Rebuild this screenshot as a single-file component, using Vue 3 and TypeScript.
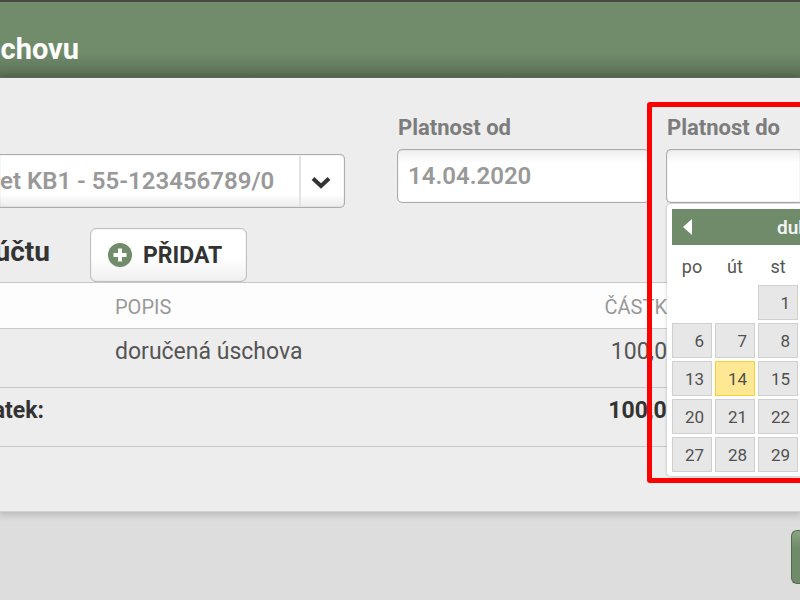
<script setup lang="ts">
import { ref } from 'vue'

interface Movement {
  description: string
  amount: string
}

const account = ref('kb1')
const validFrom = ref('14.04.2020')
const validTo = ref('')
const selectedDay = ref(14)

const movements: Movement[] = [{ description: 'doručená úschova', amount: '100,00' }]
const dayNames = ['po', 'út', 'st']
const weeks: (number | null)[][] = [
  [null, null, 1],
  [6, 7, 8],
  [13, 14, 15],
  [20, 21, 22],
  [27, 28, 29],
]
</script>

<template>
  <div class="page">
    <header class="topbar">
      <h1>chovu</h1>
    </header>

    <main class="panel">
      <form class="fields" @submit.prevent>
        <div class="account">
          <select v-model="account" aria-label="Účet">
            <option value="kb1">et KB1 - 55-123456789/0</option>
          </select>
          <svg class="chevron" viewBox="0 0 20 14" aria-hidden="true">
            <path d="M2 2.5 L10 10 L18 2.5" />
          </svg>
        </div>

        <div class="field from">
          <label for="valid-from">Platnost od</label>
          <input id="valid-from" v-model="validFrom" type="text" />
        </div>

        <div class="field to">
          <label for="valid-to">Platnost do</label>
          <input id="valid-to" v-model="validTo" type="text" />

          <div class="calendar">
            <div class="month">
              <button type="button" class="previous" aria-label="Předchozí měsíc">
                <svg viewBox="0 0 9 16" aria-hidden="true"><path d="M9 0 V16 L0 8 Z" /></svg>
              </button>
              <span>duben</span>
            </div>
            <table class="days">
              <thead>
                <tr>
                  <th v-for="name in dayNames" :key="name" scope="col">{{ name }}</th>
                </tr>
              </thead>
              <tbody>
                <tr v-for="(week, index) in weeks" :key="index">
                  <td v-for="(day, column) in week" :key="column">
                    <button
                      v-if="day"
                      type="button"
                      class="day"
                      :class="{ selected: day === selectedDay }"
                      @click="selectedDay = day"
                    >{{ day }}</button>
                  </td>
                </tr>
              </tbody>
            </table>
          </div>
          <div class="highlight"></div>
        </div>
      </form>

      <div class="section">
        <h2>účtu</h2>
        <button type="button" class="add">
          <svg viewBox="0 0 24 24" aria-hidden="true">
            <circle cx="12" cy="12" r="12" />
            <path d="M12 5.5 V18.5 M5.5 12 H18.5" />
          </svg>
          PŘIDAT
        </button>
      </div>

      <table class="movements">
        <thead>
          <tr>
            <th class="lead"></th>
            <th scope="col">POPIS</th>
            <th scope="col" class="amount">ČÁSTKA</th>
          </tr>
        </thead>
        <tbody>
          <tr v-for="movement in movements" :key="movement.description">
            <td></td>
            <td>{{ movement.description }}</td>
            <td class="amount">{{ movement.amount }}</td>
          </tr>
        </tbody>
        <tfoot>
          <tr>
            <th scope="row"><div class="total">atek:</div></th>
            <td></td>
            <td class="amount">100,00</td>
          </tr>
        </tfoot>
      </table>
    </main>

    <footer class="actions">
      <button type="button" class="submit" aria-label="Pokračovat"></button>
    </footer>
  </div>
</template>

<style>
body {
  background: #ddd;
}
</style>

<style scoped>
.page {
  min-height: 100vh;
  overflow: hidden;
  background: #ddd;
  color: #333;
  font-family: Roboto, "Liberation Sans", sans-serif;
}

.page *,
.page *::before {
  box-sizing: border-box;
}

button,
input,
select {
  font-family: inherit;
}

h1,
h2 {
  display: flex;
  justify-content: flex-end;
  margin: 0;
  font-weight: 700;
}

.topbar {
  height: 78px;
  padding-top: 30px;
  border-top: 2px solid #484848;
  background: linear-gradient(#708c6a 0 66%, #5c7158 98%, #6b7f67);
}

h1 {
  width: 79px;
  color: #fff;
  font-size: 29px;
  line-height: 34px;
}

.panel {
  min-height: 434px;
  border-bottom: 1px solid #d2d2d2;
  background: #ededed;
  box-shadow: 0 0 8px 2px rgba(0, 0, 0, 0.2);
}

.fields {
  display: flex;
  align-items: flex-end;
  padding-top: 38px;
}

.account {
  position: relative;
  flex: 1;
  margin: 0 52px -5px 0;
}

select {
  display: block;
  width: 100%;
  height: 54px;
  padding: 0;
  appearance: none;
  border: 1px solid #acacac;
  border-left: 0;
  border-radius: 0 5px 5px 0;
  background: linear-gradient(#fff 75%, #ececec);
  box-shadow: inset 0 0 1px #999;
  color: #999;
  font-size: 24px;
  font-weight: 600;
}

.account::before {
  position: absolute;
  top: 2px;
  right: 44px;
  bottom: 2px;
  width: 2px;
  background: #e4e4e4;
  content: "";
}

.chevron {
  position: absolute;
  top: 22px;
  right: 14px;
  width: 20px;
  height: 14px;
  pointer-events: none;
}

.chevron path {
  fill: none;
  stroke: #333;
  stroke-width: 4;
}

.field {
  display: flex;
  flex-direction: column;
  gap: 9px;
}

.from {
  width: 253px;
  margin-right: 16px;
}

.to {
  position: relative;
  width: 134px;
}

label {
  padding-left: 1px;
  color: #7c7c7c;
  font-size: 22px;
  font-weight: 700;
  line-height: 24px;
  white-space: nowrap;
}

input {
  width: 100%;
  height: 54px;
  padding: 0 10px;
  border: 1px solid #acacac;
  border-radius: 5px;
  background: linear-gradient(#eee, #fff 25%);
  box-shadow: inset 0 0 1px #999;
  color: #999;
  font-size: 24px;
  font-weight: 600;
}

.to input {
  border-right: 0;
  border-radius: 5px 0 0 5px;
}

.calendar {
  position: absolute;
  top: 88px;
  left: 1px;
  right: 0;
  z-index: 1;
  height: 272px;
  padding: 5px 0 0 5px;
  border-radius: 4px 0 0 4px;
  background: #fff;
  box-shadow: 0 0 3px rgba(0, 0, 0, 0.25);
}

.month {
  display: flex;
  align-items: center;
  justify-content: space-between;
  height: 36px;
  padding-left: 11px;
  overflow: hidden;
  background: #6f8b69;
  color: #f4f4f4;
  font-size: 19px;
  font-weight: 600;
}

.month span {
  width: 23px;
}

.previous {
  display: flex;
  padding: 0;
  border: 0;
  background: none;
}

.previous svg {
  width: 9px;
  height: 16px;
  fill: #fff;
}

.days {
  width: 126px;
  border-spacing: 0;
  table-layout: fixed;
}

.days th {
  height: 40px;
  padding: 2px 3px 0 0;
  color: #555;
  font-size: 18px;
  font-weight: 400;
}

.days th:last-child,
.days td:last-child {
  width: 40px;
  padding-right: 0;
}

.days td {
  height: 38px;
  padding: 0 3px 3px 0;
}

.day {
  display: block;
  width: 100%;
  height: 35px;
  padding: 0 7px 0 0;
  border: 1px solid #d0d0d0;
  background: #e7e7e7;
  color: #505050;
  font-size: 17px;
  font-weight: 400;
  text-align: right;
}

.day.selected {
  border-color: #fbcf30;
  background: #ffe893;
}

.highlight {
  position: absolute;
  top: -14px;
  left: -19px;
  right: -5px;
  z-index: 2;
  height: 381px;
  border: 5px solid #f00;
  border-radius: 3px;
  pointer-events: none;
}

.section {
  display: flex;
  align-items: center;
  gap: 40px;
  padding-top: 25px;
}

h2 {
  width: 50px;
  padding-bottom: 6px;
  font-size: 28px;
  line-height: 32px;
}

.add {
  display: flex;
  align-items: center;
  gap: 11px;
  width: 157px;
  height: 54px;
  padding: 0 17px;
  border: 1px solid #c0c0c0;
  border-radius: 6px;
  background: linear-gradient(#fff 55%, #f0f0f0);
  box-shadow: inset 0 0 1px #aaa;
  color: #333;
  font-size: 23px;
  font-weight: 700;
}

.add svg {
  flex: none;
  width: 24px;
  height: 24px;
  fill: #708c6a;
}

.add path {
  stroke: #fff;
  stroke-width: 4;
}

.movements {
  width: 100%;
  padding-right: 120px;
  border-collapse: separate;
  border-spacing: 0;
  border-top: 1px solid #c8c8c8;
  table-layout: fixed;
}

.movements th,
.movements td {
  height: 59px;
  padding: 0 0 14px;
  border-bottom: 1px solid #c8c8c8;
  font-size: 23px;
  text-align: left;
}

.movements thead th {
  height: 46px;
  padding: 3px 0 0;
  background: #fdfdfd;
  color: #999;
  font-size: 20px;
  font-weight: 400;
}

.movements td {
  color: #555;
}

.movements .lead {
  width: 115px;
}

.movements .amount {
  width: 160px;
  text-align: right;
}

.movements tfoot td,
.movements tfoot th {
  color: #333;
  font-weight: 700;
}

.total {
  display: flex;
  justify-content: flex-end;
  width: 44px;
}

.actions {
  display: flex;
  justify-content: flex-end;
  padding-top: 18px;
}

.submit {
  width: 9px;
  height: 54px;
  padding: 0;
  border: 1px solid #526b4e;
  border-right: 0;
  border-radius: 6px 0 0 6px;
  background: linear-gradient(#8aa384, #6f8b69 35%);
}
</style>
